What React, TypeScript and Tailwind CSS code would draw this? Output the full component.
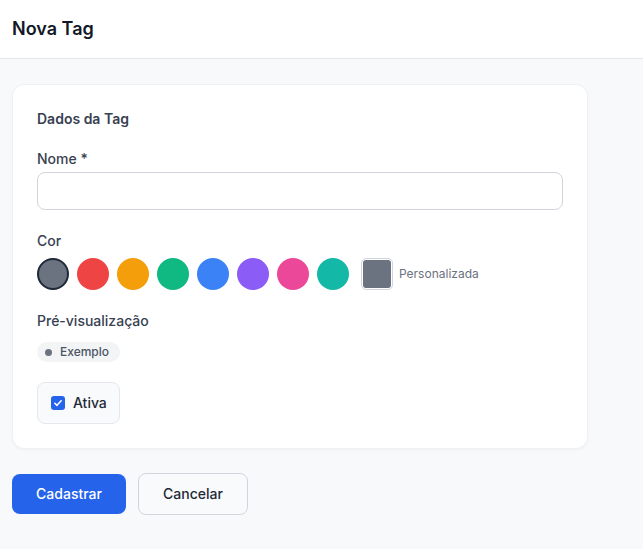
import React, { useState } from "react";

const swatches = [
  "#6b7280",
  "#ef4444",
  "#f59e0b",
  "#10b981",
  "#3b82f6",
  "#8b5cf6",
  "#ec4899",
  "#14b8a6",
];

export default function App() {
  const [color, setColor] = useState("#6b7280");
  const [active, setActive] = useState(true);

  return (
    <div
      className="min-h-[549px] bg-[#f8f9fb] text-[#1f2937]"
      style={{ fontFamily: "Inter, 'Noto Sans', sans-serif" }}
    >
      <header className="h-[59px] bg-white border-b border-[#e5e7eb] flex items-center px-3">
        <h1 className="text-[18px] font-semibold text-[#111827] pb-[2px]">Nova Tag</h1>
      </header>

      <main className="px-3 pt-[25px]">
        <div className="max-w-[576px] bg-white rounded-xl border border-[#f0f1f3] shadow-[0_1px_3px_rgba(0,0,0,0.04)] p-6">
          <h2 className="text-sm leading-5 font-semibold text-[#374151]">Dados da Tag</h2>

          <div className="mt-5">
            <label className="block text-sm leading-5 font-medium text-[#374151] mb-[3px]">Nome *</label>
            <input
              type="text"
              className="block w-full h-[38px] rounded-lg border border-[#d1d5db] bg-white px-3 text-sm outline-none"
            />
          </div>

          <div className="mt-[21px]">
            <label className="block text-sm leading-5 font-medium text-[#374151] mb-[7px]">Cor</label>
            <div className="flex items-center gap-2">
              {swatches.map((c) => (
                <button
                  key={c}
                  type="button"
                  onClick={() => setColor(c)}
                  className={
                    c === color
                      ? "w-8 h-8 rounded-full border-2 border-[#1f2937]"
                      : "w-8 h-8 rounded-full border-2 border-transparent"
                  }
                  style={{ backgroundColor: c }}
                />
              ))}
              <div className="flex items-center gap-[6px] ml-1">
                <div className="w-8 h-8 rounded-[5px] border border-[#d1d5db] p-[1px] bg-white">
                  <div className="w-full h-full rounded-[3px] bg-[#6b7280]" />
                </div>
                <span className="text-xs text-[#6b7280]">Personalizada</span>
              </div>
            </div>
          </div>

          <div className="mt-[21px]">
            <label className="block text-sm leading-5 font-medium text-[#374151] mb-[11px]">Pré-visualização</label>
            <div className="flex">
              <span className="flex items-center gap-[8px] h-5 rounded-full bg-[#f3f4f6] pl-[8px] pr-[11px] text-xs font-medium text-[#4b5563]">
                <span className="w-[7px] h-[7px] rounded-full" style={{ backgroundColor: color }} />
                Exemplo
              </span>
            </div>
          </div>

          <div className="mt-5 flex">
            <label
              className="flex items-center gap-2 h-[42px] rounded-lg border border-[#e5e7eb] bg-[#f9fafb] pl-[13px] pr-[12px] cursor-pointer"
              onClick={() => setActive(!active)}
            >
              <span
                className={
                  active
                    ? "w-[14px] h-[14px] rounded-[3px] bg-[#2563eb] flex items-center justify-center"
                    : "w-[14px] h-[14px] rounded-[3px] border border-[#9ca3af] bg-white"
                }
              >
                {active && (
                  <svg viewBox="0 0 12 12" className="w-[10px] h-[10px]" fill="none">
                    <path d="M2.2 6.3 L4.8 8.8 L9.8 3.4" stroke="white" strokeWidth="1.9" strokeLinecap="round" strokeLinejoin="round" />
                  </svg>
                )}
              </span>
              <span className="text-sm font-medium text-[#1f2937]">Ativa</span>
            </label>
          </div>
        </div>

        <div className="flex items-center gap-3 mt-6">
          <button className="h-10 w-[114px] rounded-lg bg-[#2563eb] text-white text-sm font-medium">
            Cadastrar
          </button>
          <button className="h-[42px] w-[110px] rounded-lg border border-[#d1d5db] bg-[#f9fafb] text-[#1f2937] text-sm font-medium">
            Cancelar
          </button>
        </div>
      </main>
    </div>
  );
}
